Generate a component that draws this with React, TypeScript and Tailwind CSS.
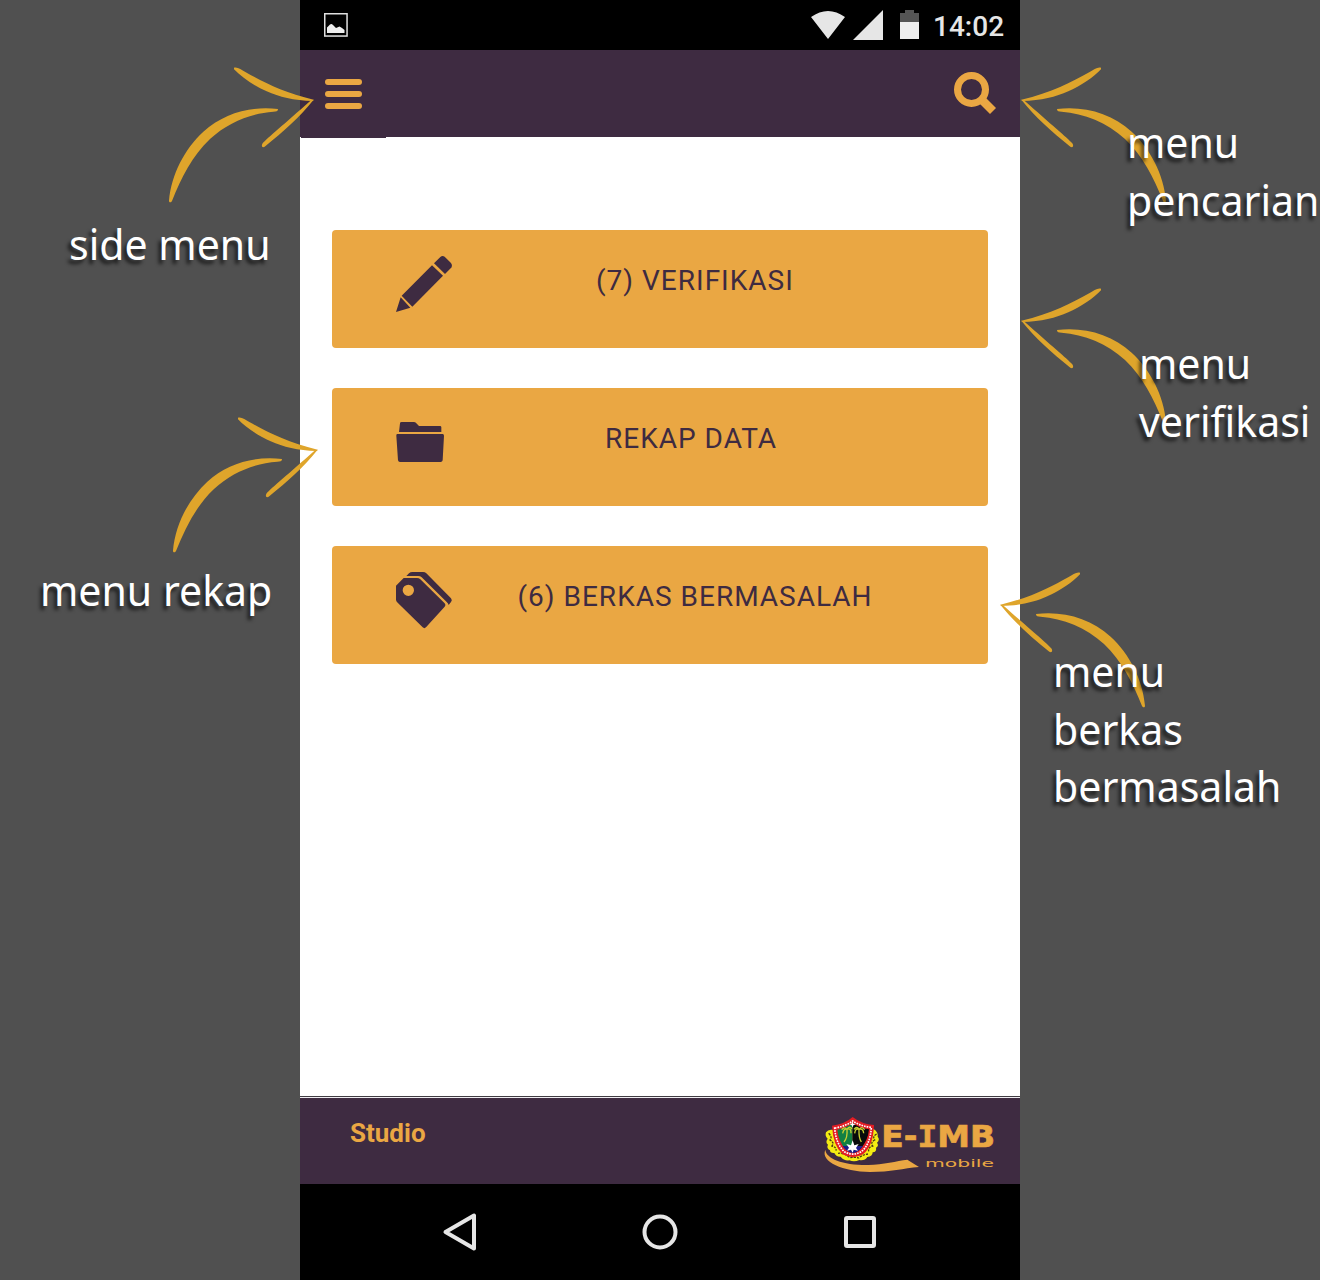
import React from "react";

function Arrow({ className }: { className: string }) {
  return (
    <svg className={`absolute h-[147px] w-[152px] ${className}`} viewBox="45 30 456 441" fill="#dfa52b">
      <path d="M252 53C262 50 274 58 286 66C340 96 400 128 491 149L489 153C430 152 388 141 350 124C310 106 275 82 252 58Z" />
      <path d="M491 149C450 200 400 245 344 290C338 294 333 289 337 281C355 262 400 225 483 151Z" />
      <path d="M384 178C384 184 378 185 370 185C303 190 234 217 180 267C127 317 94 383 66 453C63 459 57 458 57 452C64 372 104 297 160 245C220 191 300 167 384 177Z" />
    </svg>
  );
}

function Label({ lines, className }: { lines: string[]; className: string }) {
  return (
    <div
      className={`absolute origin-left scale-x-[0.977] whitespace-nowrap font-['Noto_Sans',sans-serif] text-[42px] leading-[57.5px] text-white [text-shadow:-3px_4px_4px_rgba(0,0,0,0.65)] ${className}`}
    >
      {lines.map((l) => (
        <div key={l}>{l}</div>
      ))}
    </div>
  );
}

function MenuButton({ icon, label, textClass }: { icon: React.ReactNode; label: string; textClass: string }) {
  return (
    <button className="flex h-[118px] w-full items-start rounded-[4px] bg-[#eaa743] pl-16 text-left">
      <span className="mt-6 h-16 w-16 shrink-0">{icon}</span>
      <span className={`mt-[35px] whitespace-nowrap text-[28px] leading-8 tracking-[1px] text-[#3e2b41] ${textClass}`}>
        {label}
      </span>
    </button>
  );
}

const PencilIcon = (
  <svg className="h-16 w-16" viewBox="48 42 192 192" fill="#3e2b41">
    <path d="M62 172L91 203L48 216ZM65 167L156 76L189 107L97 200ZM162 70L181 51Q187 46 194 50L213 69Q218 75 215 82L195 102Z" />
  </svg>
);

const FolderIcon = (
  <svg className="h-16 w-16" viewBox="48 36 192 192" fill="#3e2b41">
    <path d="M57 96L60 70Q60 66 65 66H101Q106 66 109 70L117 78H180Q184 78 184 82V96ZM52 102H188Q192 102 192 107L188 181Q187 186 182 186H60Q55 186 54 181L49 107Q48 102 52 102Z" />
  </svg>
);

const TagsIcon = (
  <svg className="h-16 w-16" viewBox="48 30 192 192" fill="#3e2b41">
    <path
      fillRule="evenodd"
      d="M71 54H111Q117 54 121 58L194 130Q199 135 194 140L138 202Q133 207 128 202L53 128Q48 124 48 119V77ZM85 74A17 17 0 1 0 85 108A17 17 0 1 0 85 74Z"
    />
    <path d="M79 48L87 40Q91 36 97 36H129Q135 36 139 40L213 115Q218 121 213 126L206 135Q205 130 200 126L125 52Q121 48 114 48Z" />
  </svg>
);

function Logo() {
  return (
    <svg className="mt-[14px] h-16 w-[180px]" viewBox="60 66 540 192">
      <path d="M76 179C78 206 130 226 205 225C250 224 290 213 322 209L357 231C310 235 272 246 210 246C130 244 60 216 76 179Z" fill="#eaa743" />
      <path
        d="M95 119Q84 118 78 127Q74 138 83 146Q75 156 84 164Q78 174 90 181Q90 190 103 189Q108 201 122 200Q132 213 148 211Q163 217 178 210Q194 213 202 201Q218 199 218 187Q231 185 228 173Q238 167 231 158Q241 148 233 140Q236 128 221 117L160 130Z"
        fill="#f3ec12"
      />
      <path
        d="M86 130Q98 142 90 150Q104 158 96 168Q110 172 108 182M230 132Q216 140 224 150Q210 158 218 168Q204 172 206 184M114 190Q130 187 150 203Q166 200 176 204Q188 194 204 192"
        fill="none"
        stroke="#4a3a16"
        strokeWidth="4"
        strokeDasharray="7 3"
      />
      <path d="M96 107Q135 102 158 81Q184 102 222 105Q220 168 190 192Q160 211 128 193Q99 167 96 107Z" fill="#e31d24" />
      <path d="M104 114Q137 109 158 93Q182 109 214 112Q211 163 184 185Q160 199 134 186Q108 163 104 114Z" fill="none" stroke="#fff" strokeWidth="5" strokeDasharray="5 3" />
      <path d="M112 119Q139 114 158 99V187Q146 187 135 176Q115 152 112 119Z" fill="#128043" />
      <path d="M158 99Q179 115 207 118Q204 152 182 176Q170 187 158 187Z" fill="#080b0b" />
      <path d="M128 168H189Q173 190 158 189Q141 187 128 168Z" fill="#1d1c8c" />
      <g fill="none" stroke="#c9cf31" strokeWidth="4">
        <path d="M132 156Q143 143 141 119M128 130Q131 114 141 118Q154 113 153 130M125 119Q133 109 141 118Q148 106 156 117" />
        <path d="M184 156Q176 143 177 119M164 130Q166 113 177 118Q190 114 191 130M162 118Q171 107 177 118Q186 107 194 119" />
      </g>
      <path d="M158 151L163 166L176 162L168 174L174 182L161 179L158 188L153 179L141 182L147 173L139 162L153 166ZM157 94L160 101L167 103L160 106L158 113L155 106L149 103L155 101Z" fill="#fff" />
      <g fill="#eaa743" fontFamily="DejaVu Sans, sans-serif">
        <text x="244" y="169.500" textLength="341" lengthAdjust="spacingAndGlyphs" fontWeight="700" fontSize="90" stroke="#eaa743" strokeWidth="2">
          E-<tspan fontFamily="DejaVu Sans Mono, monospace">I</tspan>MB
        </text>
        <text x="375" y="230" textLength="207" lengthAdjust="spacingAndGlyphs" fontSize="32">
          mobile
        </text>
      </g>
    </svg>
  );
}

export default function App() {
  return (
    <div className="relative flex h-[1280px] w-[1320px] justify-center overflow-hidden bg-[#505050] font-['Roboto',sans-serif]">
      <main className="flex w-[720px] flex-col bg-white">
        <div className="flex h-[50px] items-center bg-black">
          <svg className="ml-6 h-6 w-6" viewBox="0 0 24 24">
            <rect x="0.75" y="0.75" width="22.3" height="22.3" fill="none" stroke="#e0e0e0" strokeWidth="1.5" />
            <path d="M3 20V14.500L6 11.500Q7.500 10.500 9 12L12 15L15.500 13.500L18 15L20.500 17V20Z" fill="#eee" />
          </svg>
          <svg className="ml-auto h-8 w-[112px]" viewBox="810 9 112 32" fill="#e6e6e6">
            <path d="M811 17Q828 5 845 17L828 39ZM853 40L883 10V40Z" />
            <path d="M900 13H905V10H914V13H919V22H900Z" fill="#555" />
            <path d="M900 22H919V39H900Z" fill="#eee" />
          </svg>
          <span className="ml-[11px] mr-4 mt-[3px] w-[71px] whitespace-nowrap text-[28px] font-medium leading-8 text-[#e6e6e6]">14:02</span>
        </div>
        <header className="flex h-[87px] items-start justify-between bg-[#3e2b41] pl-[25px] pr-[23px]">
          <div className="mt-[29px] flex w-[37px] flex-col gap-1.5">
            <i className="h-1.5 rounded-full bg-[#eaa743]" />
            <i className="h-1.5 rounded-full bg-[#eaa743]" />
            <i className="h-1.5 rounded-full bg-[#eaa743]" />
          </div>
          <svg className="mt-[22px] h-[43px] w-[43px]" viewBox="0 0 43 43" fill="none" stroke="#eaa743">
            <circle cx="17.500" cy="17.500" r="14" strokeWidth="7" />
            <path d="M27 27L39 39" strokeWidth="8.500" />
          </svg>
        </header>
        <div className="ml-px h-px w-[85px] bg-[#3e2b41]" />
        <div className="flex flex-1 flex-col gap-10 px-8 pt-[92px]">
          <MenuButton icon={PencilIcon} label="(7) VERIFIKASI" textClass="ml-[136px]" />
          <MenuButton icon={FolderIcon} label="REKAP DATA" textClass="ml-[145px]" />
          <MenuButton icon={TagsIcon} label="(6) BERKAS BERMASALAH" textClass="ml-[57.500px]" />
        </div>
        <div className="h-px bg-[#3f3b42]" />
        <div className="h-px bg-[#f0edf1]" />
        <footer className="flex h-[86px] items-start justify-between bg-[#3e2b41] pl-[50px] pr-5">
          <span className="mt-[19px] text-[26px] font-bold leading-8 text-[#eaa743]">Studio</span>
          <Logo />
        </footer>
        <nav className="flex h-24 items-center justify-center gap-[160px] bg-black">
          <svg className="h-10 w-10" viewBox="0 0 40 40" fill="none" stroke="#e6e6e6" strokeWidth="4" strokeLinejoin="round">
            <path d="M5.500 20L34 3.500V36.500Z" />
          </svg>
          <svg className="h-10 w-10" viewBox="0 0 40 40" fill="none" stroke="#e6e6e6" strokeWidth="4">
            <circle cx="20" cy="20" r="15.500" />
          </svg>
          <svg className="h-10 w-10" viewBox="0 0 40 40" fill="none" stroke="#e6e6e6" strokeWidth="4" strokeLinejoin="round">
            <rect x="6" y="6" width="28" height="28" rx="1" />
          </svg>
        </nav>
      </main>

      <Arrow className="left-[165px] top-[60px]" />
      <Arrow className="left-[169px] top-[410px]" />
      <Arrow className="left-[1018px] top-[60px] -scale-x-100" />
      <Arrow className="left-[1018px] top-[281px] -scale-x-100" />
      <Arrow className="left-[997px] top-[565px] -scale-x-100" />

      <Label lines={["side menu"]} className="left-[69px] top-[215px]" />
      <Label lines={["menu rekap"]} className="left-[40px] top-[561px]" />
      <Label lines={["menu", "pencarian"]} className="left-[1127px] top-[113px]" />
      <Label lines={["menu", "verifikasi"]} className="left-[1139px] top-[334px]" />
      <Label lines={["menu", "berkas", "bermasalah"]} className="left-[1053px] top-[642px]" />
    </div>
  );
}
